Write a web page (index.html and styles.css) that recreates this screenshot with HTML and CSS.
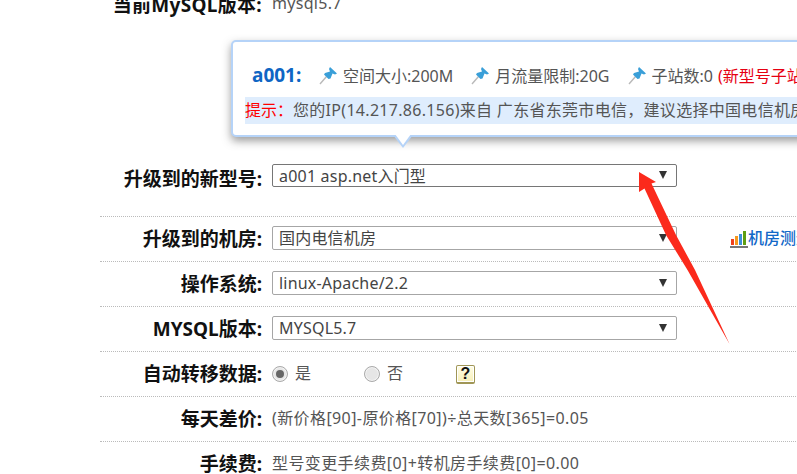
FILE: index.html
```html
<!DOCTYPE html>
<html lang="zh">
<head>
<meta charset="utf-8">
<title>升级</title>
<link rel="stylesheet" href="styles.css">
</head>
<body>
<main class="form">
  <div class="row row-current">
    <div class="label">当前MySQL版本:</div>
    <div class="value plain">mysql5.7</div>
  </div>
  <div class="row row-model">
    <div class="label">升级到的新型号:</div>
    <div class="value"><div class="select dark"><select><option>a001 asp.net入门型</option></select></div></div>
  </div>
  <div class="row">
    <div class="label">升级到的机房:</div>
    <div class="value">
      <div class="select"><select><option>国内电信机房</option></select></div>
      <a class="speed" href="#">
        <svg class="speed-icon" width="18" height="18" viewBox="0 0 18 18"><rect x="1" y="9" width="3" height="6" fill="#f0401c"/><rect x="5" y="6" width="3" height="9" fill="#f79a1e"/><rect x="9" y="4" width="3" height="11" fill="#3d8fd8"/><rect x="13" y="1" width="3" height="14" fill="#5f9e12"/><rect x="0" y="16" width="18" height="2" fill="#777"/></svg><span class="speed-text">机房测速</span>
      </a>
    </div>
  </div>
  <div class="row">
    <div class="label">操作系统:</div>
    <div class="value"><div class="select"><select><option>linux-Apache/2.2</option></select></div></div>
  </div>
  <div class="row">
    <div class="label">MYSQL版本:</div>
    <div class="value"><div class="select"><select><option>MYSQL5.7</option></select></div></div>
  </div>
  <div class="row">
    <div class="label">自动转移数据:</div>
    <div class="value radios">
      <span class="radio-item"><i class="radio checked"></i><span class="radio-text">是</span></span>
      <span class="radio-item"><i class="radio"></i><span class="radio-text">否</span></span>
      <span class="help">?</span>
    </div>
  </div>
  <div class="row">
    <div class="label">每天差价:</div>
    <div class="value plain">(新价格[90]-原价格[70])÷总天数[365]=0.05</div>
  </div>
  <div class="row row-last">
    <div class="label">手续费:</div>
    <div class="value plain">型号变更手续费[0]+转机房手续费[0]=0.00</div>
  </div>
</main>

<aside class="tip">
  <div class="tip-spec">
    <b class="tip-name">a001:</b>
    <span class="spec"><svg class="pin" width="20" height="20" viewBox="0 0 20 20"><path d="M1 19 L7.5 11.5" stroke="#b9b9b9" stroke-width="1.4"/><path d="M11 2 L18 8.5 L16 9.5 L13.5 8.5 L11.5 13.5 L9.5 14 L5 9.5 L6 8 L11 6.5 L10 4 Z" fill="#3a9fd8"/></svg>空间大小:200M</span>
    <span class="spec"><svg class="pin" width="20" height="20" viewBox="0 0 20 20"><path d="M1 19 L7.5 11.5" stroke="#b9b9b9" stroke-width="1.4"/><path d="M11 2 L18 8.5 L16 9.5 L13.5 8.5 L11.5 13.5 L9.5 14 L5 9.5 L6 8 L11 6.5 L10 4 Z" fill="#3a9fd8"/></svg>月流量限制:20G</span>
    <span class="spec"><svg class="pin" width="20" height="20" viewBox="0 0 20 20"><path d="M1 19 L7.5 11.5" stroke="#b9b9b9" stroke-width="1.4"/><path d="M11 2 L18 8.5 L16 9.5 L13.5 8.5 L11.5 13.5 L9.5 14 L5 9.5 L6 8 L11 6.5 L10 4 Z" fill="#3a9fd8"/></svg>子站数:0 <em class="warn">(新型号子站数不足)</em></span>
  </div>
  <div class="tip-note"><span class="note-key">提示：</span>您的IP(14.217.86.156)来自 广东省东莞市电信，建议选择中国电信机房</div>
  <span class="tip-arrow"></span>
</aside>

<svg class="red-arrow" width="100" height="180" viewBox="0 0 100 180"><polygon points="9,7 26,17 21.5,18.5 46,70 65,105 99.5,179 57.5,105 36,70 14.5,23.5 9,27" fill="#fb2a1c"/></svg>
</body>
</html>
```
FILE: styles.css
```css
html, body {
  margin: 0;
  height: 474px;
  overflow: hidden;
  background: #fff;
}
body {
  position: relative;
  font-family: "Noto Sans", "Noto Sans CJK SC", sans-serif;
  font-size: 16px;
  color: #444;
}
.form {
  width: 760px;
  margin: -9px 0 0 100px;
}
.row {
  display: flex;
  align-items: center;
  height: 44px;
  border-bottom: 1px dotted #bbb;
}
.row-current {
  height: 172px;
  align-items: flex-start;
  border-bottom: none;
}
.row-model {
  height: 53px;
  align-items: flex-start;
}
.row-last {
  border-bottom: none;
}
.label {
  width: 162px;
  flex: none;
  text-align: right;
  font-size: 19px;
  font-weight: 700;
  color: #111;
  line-height: 24px;
}
.row-current .label { line-height: 26px; margin-top: 1px; letter-spacing: .3px; }
.row-model .label { margin-top: 4px; }
.value {
  display: flex;
  align-items: center;
  margin-left: 10px;
  flex: 1;
  min-width: 0;
}
.plain {
  color: #555;
  font-size: 16px;
  letter-spacing: .4px;
  white-space: nowrap;
  margin-top: -4px;
}
.row-current .plain { margin-top: 0; line-height: 24px; letter-spacing: .3px; }
.select {
  position: relative;
  width: 405px;
  height: 24px;
  flex: none;
  margin-top: -3px;
}
.select.dark { margin-top: 1px; height: 23px; }
.select select {
  appearance: none;
  display: block;
  width: 100%;
  height: 100%;
  box-sizing: border-box;
  border: 1px solid #a6a6a6;
  border-radius: 2px;
  background: #fff;
  padding: 0 24px 0 6px;
  font: inherit;
  letter-spacing: .2px;
  color: #444;
}
.select.dark select { border-color: #767676; }
.select::after {
  content: "";
  position: absolute;
  right: 10px;
  top: 8px;
  border-left: 4px solid transparent;
  border-right: 4px solid transparent;
  border-top: 8px solid #333;
}
.select.dark::after { top: 7px; }
.speed {
  display: flex;
  align-items: center;
  margin-left: 53px;
  color: #1268c8;
  font-weight: 500;
  text-decoration: none;
  white-space: nowrap;
}
.speed-text { margin-top: -4px; }
.speed-icon { flex: none; }
.radios { gap: 0; color: #555; }
.radio-item {
  display: flex;
  align-items: center;
  width: 92px;
  flex: none;
  margin-top: -2px;
}
.radio-text { margin-top: -3px; }
.radio {
  box-sizing: border-box;
  width: 16px;
  height: 16px;
  margin: 2px 7px 0 0;
  border: 1px solid #aaa;
  border-radius: 50%;
  background: #e6e6e6;
  box-shadow: inset 0 0 0 1px #f3f3f3;
  position: relative;
}
.radio.checked::after {
  content: "";
  position: absolute;
  left: 3px;
  top: 3px;
  width: 8px;
  height: 8px;
  border-radius: 50%;
  background: #666;
}
.help {
  box-sizing: border-box;
  width: 19px;
  height: 19px;
  border: 1px solid #a09656;
  border-radius: 2px;
  border-bottom-width: 2px;
  background: linear-gradient(#fffde6, #f7efb8);
  box-shadow: inset 0 0 0 1px #fff;
  color: #111;
  font: 700 16px/16px "Liberation Sans", sans-serif;
  text-align: center;
}
.tip {
  position: absolute;
  left: 231px;
  top: 40px;
  width: 640px;
  height: 97px;
  box-sizing: border-box;
  padding: 14px 0 0 12px;
  background: #fff;
  border: 2px solid #b5d3f8;
  border-radius: 5px;
  box-shadow: 0 4px 8px rgba(60, 60, 60, .5);
}
.tip-spec {
  display: flex;
  align-items: center;
  height: 38px;
  white-space: nowrap;
  color: #555;
  padding-left: 7px;
  font-size: 16px;
}
.tip-name {
  color: #0f66c4;
  font-size: 19px;
  font-weight: 700;
  width: 67px;
  flex: none;
}
.spec {
  display: flex;
  align-items: center;
  margin-right: 18px;
}
.pin { margin-right: 4px; flex: none; }
.warn { font-style: normal; color: #e60012; margin-left: 5px; }
.tip-note {
  height: 27px;
  line-height: 26px;
  margin-top: 3px;
  background: #dfedfd;
  color: #555;
  font-size: 16px;
  letter-spacing: .3px;
  white-space: nowrap;
}
.note-key { color: #f00; letter-spacing: 0; }
.tip-arrow {
  position: absolute;
  left: 160px;
  top: 93px;
  width: 0;
  height: 0;
  border-left: 10px solid transparent;
  border-right: 10px solid transparent;
  border-top: 13px solid #b5d3f8;
}
.tip-arrow::after {
  content: "";
  position: absolute;
  left: -8px;
  top: -14px;
  border-left: 8px solid transparent;
  border-right: 8px solid transparent;
  border-top: 11px solid #fff;
}
.red-arrow {
  position: absolute;
  left: 630px;
  top: 165px;
}
```
